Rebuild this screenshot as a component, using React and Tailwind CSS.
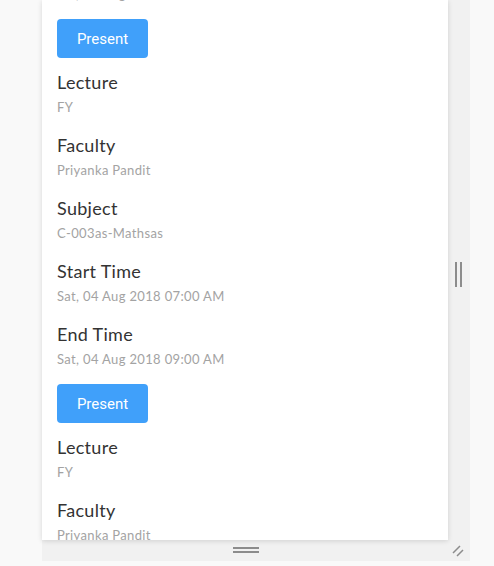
import React from 'react';

const records = [
  { lecture: 'FY', faculty: 'Priyanka Pandit', subject: 'C-003as-Mathsas', start: 'Sat, 04 Aug 2018 07:00 AM', end: 'Sat, 04 Aug 2018 09:00 AM' },
  { lecture: 'FY', faculty: 'Priyanka Pandit', subject: 'C-003as-Mathsas', start: 'Sat, 04 Aug 2018 07:00 AM', end: 'Sat, 04 Aug 2018 09:00 AM' },
  { lecture: 'FY', faculty: 'Priyanka Pandit', subject: 'C-003as-Mathsas', start: 'Sat, 04 Aug 2018 07:00 AM', end: 'Sat, 04 Aug 2018 09:00 AM' },
];

const Field = ({ label, value }) => (
  <div className="mb-[18px] last:mb-0">
    <h4 className="text-[18px] leading-[22px] tracking-[0.3px] text-[#333]">{label}</h4>
    <p className="mt-[5px] text-[13px] leading-[18px] tracking-[0.35px] text-[#a3a3a3]">{value}</p>
  </div>
);

const Record = ({ rec }) => (
  <div className="pb-[16px]">
    <button className="h-[39px] w-[91px] rounded-[4px] bg-[#40a0fa] text-[15px] leading-[40px] text-white mb-[13px] font-['Roboto',sans-serif]">
      Present
    </button>
    <Field label="Lecture" value={rec.lecture} />
    <Field label="Faculty" value={rec.faculty} />
    <Field label="Subject" value={rec.subject} />
    <Field label="Start Time" value={rec.start} />
    <Field label="End Time" value={rec.end} />
  </div>
);

export default function App() {
  return (
    <div className="h-[566px] w-[494px] bg-[#f9f9f9] overflow-hidden font-['Lato',sans-serif]">
      <div className="ml-[42px] w-[428px] h-[561px] bg-[#f1f1f1] flex flex-col">
        <div className="flex h-[540px]">
          <div className="w-[406px] h-full bg-white overflow-hidden shadow-[0_1px_5px_rgba(0,0,0,0.14)]">
            <div className="-mt-[346px] px-[15px]">
              {records.map((r, i) => (
                <Record key={i} rec={r} />
              ))}
            </div>
          </div>
          <div className="flex-1 flex items-center justify-center">
            <div className="flex gap-[3px] h-[25px] -ml-[2px] mt-[8px]">
              <span className="w-[2px] h-full bg-[#8c8c8c]" />
              <span className="w-[2px] h-full bg-[#8c8c8c]" />
            </div>
          </div>
        </div>
        <div className="flex-1 flex items-center relative">
          <div className="ml-[191px] -mt-[2px] flex flex-col gap-[2px] w-[26px]">
            <span className="h-[2px] w-full bg-[#8c8c8c]" />
            <span className="h-[2px] w-full bg-[#8c8c8c]" />
          </div>
          <svg className="absolute right-[6px] top-[5px]" width="12" height="12" viewBox="0 0 12 12">
            <path d="M1 8 L8 1 M5 11 L11 5" stroke="#8c8c8c" strokeWidth="1.5" />
          </svg>
        </div>
      </div>
    </div>
  );
}
